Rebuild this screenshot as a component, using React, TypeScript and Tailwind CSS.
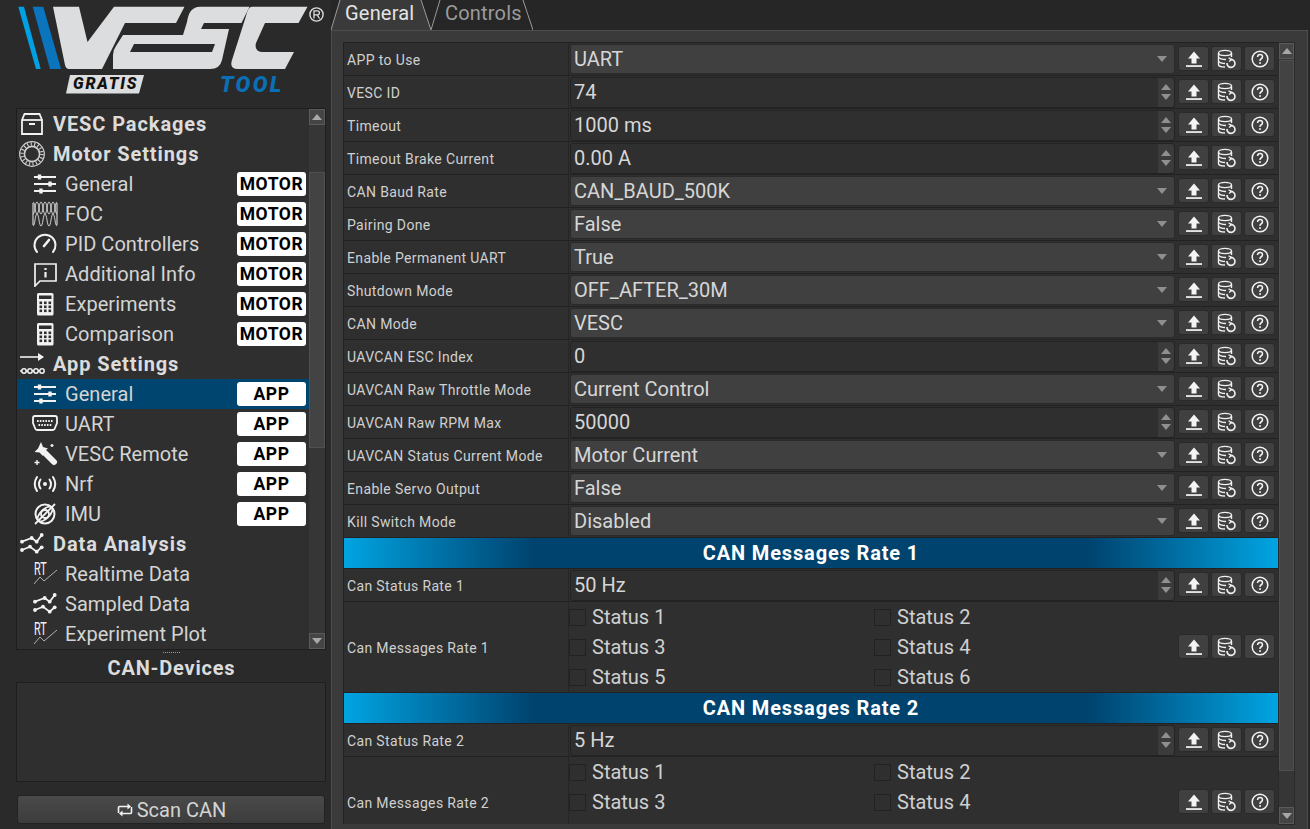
import type { ReactNode } from 'react';

const FONT = "font-['Roboto',sans-serif]";

// ---- small drawn icons ----

const Ico = ({ children, className = 'w-[26px] h-[26px]' }: { children: ReactNode; className?: string }) => (
    <svg viewBox="0 0 26 26" fill="none" stroke="#f2f2f2" strokeWidth="1.6" className={`${className} shrink-0`}>
        {children}
    </svg>
);

const IconPackage = () => (
    <Ico>
        <path d="M3 9 L5.5 3 H20.5 L23 9 V23 H3 Z" strokeWidth="1.8" />
        <path d="M3 9 H23" strokeWidth="1.8" />
        <path d="M10 13 H16" strokeWidth="2" />
    </Ico>
);

const IconMotor = () => (
    <Ico>
        <circle cx="13" cy="13" r="12.3" strokeWidth="1.2" stroke="#cfcfcf" />
        <circle cx="13" cy="13" r="7.6" strokeWidth="1.6" stroke="#cfcfcf" />
        <circle cx="13" cy="13" r="10" strokeWidth="3.4" stroke="#cfcfcf" strokeDasharray="1.1 2.4" />
    </Ico>
);

const IconSliders = () => (
    <Ico>
        <path d="M2 6 H24 M2 13 H24 M2 20 H24" strokeWidth="1.8" />
        <path d="M7.5 3.5 V8.5 M18 10.5 V15.5 M9 17.5 V22.5" strokeWidth="3.4" />
    </Ico>
);

const IconFoc = () => (
    <Ico>
        <path d="M1 2 V24 M25 2 V24" strokeWidth="1" />
        <path d="M1 1 C3 1 3 13 5 13 C7 13 7 1 9 1 C11 1 11 13 13 13 C15 13 15 1 17 1 C19 1 19 13 21 13 C23 13 23 1 25 1" strokeWidth="0.8" />
        <path d="M1 13 C3 13 3 1 5 1 C7 1 7 13 9 13 C11 13 11 1 13 1 C15 1 15 13 17 13 C19 13 19 1 21 1 C23 1 23 13 25 13" strokeWidth="0.8" />
        <path d="M1 25 C3 25 3 13 5 13 C7 13 7 25 9 25 C11 25 11 13 13 13 C15 13 15 25 17 25 C19 25 19 13 21 13 C23 13 23 25 25 25" strokeWidth="0.8" />
    </Ico>
);

const IconGauge = () => (
    <Ico>
        <path d="M5 21 A10.5 10.5 0 1 1 21 21" strokeWidth="2" strokeLinecap="round" />
        <path d="M12 15 L17 9" strokeWidth="2.6" strokeLinecap="round" />
    </Ico>
);

const IconInfo = () => (
    <Ico>
        <path d="M3 3 H24 V20 H8 L3 25 Z" strokeWidth="1.7" />
        <path d="M13.5 7 V9 M13.5 11 V16.5" strokeWidth="2.2" />
    </Ico>
);

const IconCalc = () => (
    <Ico>
        <rect x="5" y="2" width="16.5" height="22.5" rx="1.5" fill="#f2f2f2" stroke="none" />
        <rect x="7" y="4.5" width="12.5" height="3.5" fill="#2f2f2f" stroke="none" />
        {[10.5, 14.5, 18.5].map((y) =>
            [7.5, 12, 16.5].map((x) => <rect key={`${x}-${y}`} x={x} y={y} width="2.6" height="2.6" fill="#2f2f2f" stroke="none" />)
        )}
    </Ico>
);

const IconApp = () => (
    <Ico>
        <path d="M1 6 H24" strokeWidth="1.6" />
        <path d="M19 2 L25 6 L19 10 Z" fill="#f2f2f2" stroke="none" />
        <path d="M1 20 H25" strokeWidth="1.4" />
        {[5, 11, 17, 23].map((x) => <circle key={x} cx={x} cy="20" r="2.2" fill="#2b2b2b" strokeWidth="1.5" />)}
    </Ico>
);

const IconSerial = () => (
    <Ico>
        <path d="M1 7 Q1 5 3 5 H23 Q25 5 25 7 V12 L23 17 Q22.5 19 21 19 H5 Q3.5 19 3 17 L1 12 Z" strokeWidth="1.8" />
        <path d="M5 10 H21 M6.5 14 H19.5" strokeWidth="1.8" strokeDasharray="1.6 1.2" />
    </Ico>
);

const IconWand = () => (
    <Ico>
        <path d="M13 12 L22 21" strokeWidth="6" strokeLinecap="round" />
        <path d="M9 1 L11 6 L16 7.5 L12 10.5 L11 15 L7.5 11.5 L2.5 11 L6 7.5 Z" fill="#f2f2f2" stroke="none" />
        <path d="M20 3 V6 M18.5 4.5 H21.5 M5 19 V24 M2.5 21.5 H7.5" strokeWidth="1.4" />
    </Ico>
);

const IconNrf = () => (
    <Ico>
        <circle cx="13" cy="13" r="2" fill="#f2f2f2" stroke="none" />
        <path d="M8.5 8.5 Q5.5 13 8.5 17.5 M17.5 8.5 Q20.5 13 17.5 17.5" strokeWidth="2" strokeLinecap="round" />
        <path d="M5 6 Q0.5 13 5 20 M21 6 Q25.5 13 21 20" strokeWidth="2" strokeLinecap="round" />
    </Ico>
);

const IconImu = () => (
    <Ico>
        <circle cx="13" cy="13" r="9.5" strokeWidth="2" />
        <ellipse cx="13" cy="13" rx="9.5" ry="4.5" strokeWidth="1.8" transform="rotate(-45 13 13)" />
        <circle cx="13" cy="13" r="4" strokeWidth="1.8" />
        <path d="M3 23 L23 3" strokeWidth="1.8" />
    </Ico>
);

const IconWave = () => (
    <Ico>
        <path d="M3 10.7 L12.7 7 L17.7 10.7 L22.7 4" strokeWidth="1.8" />
        <path d="M3 19 L11 15.7 L17.7 20.7 L22.7 16.3" strokeWidth="1.8" />
        {[[3, 10.7], [12.7, 7], [17.7, 10.7], [22.7, 4], [3, 19], [11, 15.7], [17.7, 20.7], [22.7, 16.3]].map(([x, y]) => (
            <circle key={`${x}-${y}`} cx={x} cy={y} r="1.9" fill="#f2f2f2" stroke="none" />
        ))}
    </Ico>
);

const IconRt = () => (
    <div className="relative w-[26px] h-[26px] shrink-0">
        <span className="absolute left-[2px] top-[-1px] text-[18px] leading-[18px] text-[#f2f2f2] scale-x-[0.6] origin-left">RT</span>
        <svg viewBox="0 0 26 26" fill="none" stroke="#bdbdbd" strokeWidth="0.9" className="absolute inset-0 w-[26px] h-[26px]">
            <path d="M2 23 L8 16 L12 20 L25 9" />
        </svg>
    </div>
);

const BtnUpload = () => (
    <svg viewBox="0 0 20 20" className="w-[20px] h-[20px]">
        <path d="M10 2.5 L16 9.5 H12.5 V14.5 H7.5 V9.5 H4 Z" fill="#f4f4f4" />
        <rect x="2" y="16.2" width="16" height="1.7" fill="#f4f4f4" />
    </svg>
);

const BtnRestore = () => (
    <svg viewBox="0 0 20 20" fill="none" stroke="#f0f0f0" strokeWidth="1.4" className="w-[20px] h-[20px]">
        <ellipse cx="8" cy="4" rx="6.5" ry="2.6" />
        <path d="M1.5 4 V15.5 Q1.5 18 8 18 M14.5 4 V8 M1.5 8 Q3 10.5 9 10.5 M1.5 12 Q3 14.5 8 14.5" />
        <path d="M13 10.5 A4 4 0 1 1 10 14" strokeWidth="1.6" />
        <path d="M11.5 8.8 L14.6 10.6 L12 12.6" strokeWidth="1.3" />
    </svg>
);

const BtnHelp = () => (
    <svg viewBox="0 0 20 20" fill="none" stroke="#f4f4f4" className="w-[20px] h-[20px]">
        <circle cx="10" cy="10" r="7.8" strokeWidth="1.5" />
        <path d="M7.5 8 Q7.8 5.6 10 5.6 Q12.5 5.6 12.5 7.8 Q12.5 9.2 11 10 Q10 10.6 10 12" strokeWidth="1.5" />
        <rect x="9.2" y="13.2" width="1.7" height="1.7" fill="#f4f4f4" stroke="none" />
    </svg>
);

const Logo = () => (
    <div className="relative h-[108px] w-[331px] shrink-0">
        <svg viewBox="0 0 331 108" className="w-[331px] h-[108px]">
            <path d="M18.3 6.7 H24 L40.7 69 H36 Z" fill="#00a1e4" />
            <path d="M32.7 6.7 H43.3 L61 69 H50 Z" fill="#0a74bd" />
            <path d="M53 6.7 H79 L87.5 42 L114 6.7 H184.5 L176 23 H125 L102 69 H69 Q66 69 65 65 Z" fill="#dcddde" />
            <path d="M113 69 V55 Q113 50 116 46 L123 35 H183 L187 22 Q189 6.7 200 6.7 H249.5 L241.5 23 H204 L201 29 H229 L222 60 Q220 69 210 69 Z M134 44 L130 52 H212 L215 44 Z" fill="#dcddde" fillRule="evenodd" />
            <path d="M252 6.7 H307.5 L298.5 23 H265 L256 43 Q254 51 262 52 H294 L285 69 H238 Q229 69 232 60 L246 16 Q248 6.7 252 6.7 Z" fill="#dcddde" />
            <circle cx="316.5" cy="14.5" r="6.6" fill="none" stroke="#dcddde" strokeWidth="1.4" />
            <path d="M314 18.5 V10.8 H317.5 Q319.4 10.8 319.4 12.8 Q319.4 14.8 317.5 14.8 H314 M317 14.8 L319.6 18.5" fill="none" stroke="#dcddde" strokeWidth="1.3" />
            <path d="M70 75 H144 L139 93.5 H66 Z" fill="#dcddde" />
        </svg>
        <span className="absolute left-[73px] top-[75px] text-[16px] leading-[18px] font-black italic tracking-[1.8px] text-[#111]">GRATIS</span>
        <span className="absolute left-[220px] top-[74px] text-[22px] leading-[22px] font-black italic tracking-[2.4px] text-[#0a6fb5]">TOOL</span>
    </div>
);

// ---- sidebar ----

type NavRow = { label: string; icon: ReactNode; badge?: string; head?: boolean; active?: boolean };

const navRows: NavRow[] = [
    { label: 'VESC Packages', icon: <IconPackage />, head: true },
    { label: 'Motor Settings', icon: <IconMotor />, head: true },
    { label: 'General', icon: <IconSliders />, badge: 'MOTOR' },
    { label: 'FOC', icon: <IconFoc />, badge: 'MOTOR' },
    { label: 'PID Controllers', icon: <IconGauge />, badge: 'MOTOR' },
    { label: 'Additional Info', icon: <IconInfo />, badge: 'MOTOR' },
    { label: 'Experiments', icon: <IconCalc />, badge: 'MOTOR' },
    { label: 'Comparison', icon: <IconCalc />, badge: 'MOTOR' },
    { label: 'App Settings', icon: <IconApp />, head: true },
    { label: 'General', icon: <IconSliders />, badge: 'APP', active: true },
    { label: 'UART', icon: <IconSerial />, badge: 'APP' },
    { label: 'VESC Remote', icon: <IconWand />, badge: 'APP' },
    { label: 'Nrf', icon: <IconNrf />, badge: 'APP' },
    { label: 'IMU', icon: <IconImu />, badge: 'APP' },
    { label: 'Data Analysis', icon: <IconWave />, head: true },
    { label: 'Realtime Data', icon: <IconRt /> },
    { label: 'Sampled Data', icon: <IconWave /> },
    { label: 'Experiment Plot', icon: <IconRt /> },
];

const SideRow = ({ row }: { row: NavRow }) => (
    <div className={`h-[30px] flex items-center ${row.active ? 'bg-[#00456f]' : ''} ${row.head ? 'pl-[2px]' : 'pl-[15px]'}`}>
        {row.icon}
        {row.head ? (
            <span className="ml-[8px] text-[20px] font-bold tracking-[0.9px] text-[#dcdcdc]">{row.label}</span>
        ) : (
            <span className="ml-[7px] text-[20px] tracking-[0.05px] text-[#d4d4d4]">{row.label}</span>
        )}
        {row.badge && (
            <span className="ml-auto mr-[3px] w-[69px] h-[24px] rounded-[3px] bg-white text-black text-[17.5px] leading-[24px] font-bold text-center tracking-[0.6px]">
                {row.badge}
            </span>
        )}
    </div>
);

const ScrollArrow = ({ up, className = '' }: { up?: boolean; className?: string }) => (
    <div className={`bg-[#454545] border border-[#5a5a5a] flex items-center justify-center shrink-0 ${className}`}>
        <svg viewBox="0 0 10 6" className="w-[10px] h-[6px]">
            <path d={up ? 'M0 6 L5 0 L10 6 Z' : 'M0 0 L5 6 L10 0 Z'} fill="#a8a8a8" />
        </svg>
    </div>
);

const Sidebar = () => (
    <aside className="w-[331px] shrink-0 h-full flex flex-col bg-[#2a2a2a]">
        <Logo />
        <div className="ml-[16px] w-[310px] h-[542px] shrink-0 flex border border-[#1e1e1e] bg-[#2f2f2f] overflow-hidden">
            <div className="flex-1 min-w-0">
                {navRows.map((row, i) => <SideRow key={i} row={row} />)}
            </div>
            <div className="w-[16px] shrink-0 bg-[#363636] flex flex-col">
                <ScrollArrow up className="h-[16px]" />
                <div className="flex-1 pt-[47px] pb-[185px]">
                    <div className="h-full bg-[#434343] border border-[#505050]" />
                </div>
                <ScrollArrow className="h-[16px]" />
            </div>
        </div>
        <div className="h-[3px] mt-[2px] shrink-0 flex justify-center pl-[12px]">
            <div className="w-[17px] h-[2px] border-t border-dotted border-[#9a9a9a]" />
        </div>
        <div className="h-[27px] shrink-0 pl-[12px] text-center text-[20px] leading-[27px] font-bold tracking-[0.8px] text-[#dcdcdc]">CAN-Devices</div>
        <div className="ml-[16px] w-[310px] h-[100px] shrink-0 border border-[#1e1e1e] bg-[#2f2f2f]" />
        <button className="ml-[17px] mt-[13px] w-[308px] h-[29px] shrink-0 rounded-[3px] border border-[#222] bg-gradient-to-b from-[#4a4a4a] to-[#3c3c3c] flex items-center justify-center gap-[3px] text-[20px] text-[#d4d4d4]">
            <svg viewBox="0 0 18 14" fill="none" stroke="#f2f2f2" strokeWidth="1.6" className="w-[18px] h-[14px]">
                <path d="M2.5 10 V4.5 Q2.5 3.5 3.5 3.5 H13" />
                <path d="M15.5 4 V9.5 Q15.5 10.5 14.5 10.5 H5" />
                <path d="M11.5 0.5 L15 3.5 L11.5 6.5 Z" fill="#f2f2f2" stroke="none" />
                <path d="M6.5 7.5 L3 10.5 L6.5 13.5 Z" fill="#f2f2f2" stroke="none" />
            </svg>
            Scan CAN
        </button>
    </aside>
);

// ---- settings table ----

type Field = { label: string; value: string; kind: 'select' | 'spin' };

const fields: Field[] = [
    { label: 'APP to Use', value: 'UART', kind: 'select' },
    { label: 'VESC ID', value: '74', kind: 'spin' },
    { label: 'Timeout', value: '1000 ms', kind: 'spin' },
    { label: 'Timeout Brake Current', value: '0.00 A', kind: 'spin' },
    { label: 'CAN Baud Rate', value: 'CAN_BAUD_500K', kind: 'select' },
    { label: 'Pairing Done', value: 'False', kind: 'select' },
    { label: 'Enable Permanent UART', value: 'True', kind: 'select' },
    { label: 'Shutdown Mode', value: 'OFF_AFTER_30M', kind: 'select' },
    { label: 'CAN Mode', value: 'VESC', kind: 'select' },
    { label: 'UAVCAN ESC Index', value: '0', kind: 'spin' },
    { label: 'UAVCAN Raw Throttle Mode', value: 'Current Control', kind: 'select' },
    { label: 'UAVCAN Raw RPM Max', value: '50000', kind: 'spin' },
    { label: 'UAVCAN Status Current Mode', value: 'Motor Current', kind: 'select' },
    { label: 'Enable Servo Output', value: 'False', kind: 'select' },
    { label: 'Kill Switch Mode', value: 'Disabled', kind: 'select' },
];

const ActionButtons = () => (
    <div className="flex gap-[2px] shrink-0 ml-[3px] mr-[3px] mb-[1px]">
        {[<BtnUpload key="u" />, <BtnRestore key="r" />, <BtnHelp key="h" />].map((icon, i) => (
            <div key={i} className="w-[31px] h-[25px] rounded-[3px] border border-[#2a2a2a] bg-[#404040] flex items-center justify-center">
                {icon}
            </div>
        ))}
    </div>
);

const Tri = ({ up }: { up?: boolean }) => (
    <svg viewBox="0 0 10 6" className="w-[10px] h-[6px]">
        <path d={up ? 'M0 6 L5 0 L10 6 Z' : 'M0 0 L5 6 L10 0 Z'} fill="#8f8f8f" />
    </svg>
);

const Label = ({ text }: { text: string }) => (
    <div className="w-[225px] shrink-0 h-full flex items-center pl-[3px] pt-[2px] border-r border-[#262626] text-[14px] tracking-[0.36px] text-[#d0d0d0]">
        {text}
    </div>
);

const FieldRow = ({ field }: { field: Field }) => (
    <div className="h-[33px] shrink-0 flex items-center border-b border-[#222]">
        <Label text={field.label} />
        {field.kind === 'select' ? (
            <div className="flex-1 h-[30px] ml-[1px] rounded-[3px] border border-[#2a2a2a] bg-[#404040] flex items-center pl-[3px] pr-[7px] text-[20px] text-[#d6d6d6]">
                <span className="flex-1">{field.value}</span>
                <Tri />
            </div>
        ) : (
            <div className="flex-1 h-[31px] ml-[1px] rounded-[3px] border border-[#232323] bg-[#2f2f2f] flex items-center pl-[3px] text-[20px] text-[#d6d6d6]">
                <span className="flex-1">{field.value}</span>
                <div className="w-[16px] h-full bg-[#3b3b3b] rounded-r-[3px] flex flex-col items-center justify-center gap-[4px]">
                    <Tri up />
                    <Tri />
                </div>
            </div>
        )}
        <ActionButtons />
    </div>
);

const Band = ({ title }: { title: string }) => (
    <div className="h-[31px] shrink-0 flex border-b border-[#222]">
        <div className="w-[190px] bg-gradient-to-r from-[#00a5e3] to-[#00436f]" />
        <div className="flex-1 bg-[#00436f] flex items-center justify-center text-[20px] font-bold tracking-[0.85px] text-white">{title}</div>
        <div className="w-[190px] bg-gradient-to-r from-[#00436f] to-[#00a5e3]" />
    </div>
);

const CheckRow = ({ label, names }: { label: string; names: string[] }) => (
    <div className="h-[91px] flex border-b border-[#222] shrink-0">
        <Label text={label} />
        <div className="flex-1 grid grid-cols-[305px_1fr] grid-rows-3">
            {names.map((n) => (
                <div key={n} className="flex items-center gap-[6px] text-[20px] text-[#d0d0d0]">
                    <span className="w-[17px] h-[17px] border border-[#222] bg-[#2f2f2f]" />
                    {n}
                </div>
            ))}
        </div>
        <div className="flex items-center">
            <ActionButtons />
        </div>
    </div>
);

const statuses = ['Status 1', 'Status 2', 'Status 3', 'Status 4', 'Status 5', 'Status 6'];

const SettingsTable = () => (
    <div className="w-[935px] h-[782px] overflow-hidden border-t border-l border-[#222] bg-[#2f2f2f] flex flex-col">
        {fields.map((f) => <FieldRow key={f.label} field={f} />)}
        <Band title="CAN Messages Rate 1" />
        <FieldRow field={{ label: 'Can Status Rate 1', value: '50 Hz', kind: 'spin' }} />
        <CheckRow label="Can Messages Rate 1" names={statuses} />
        <Band title="CAN Messages Rate 2" />
        <FieldRow field={{ label: 'Can Status Rate 2', value: '5 Hz', kind: 'spin' }} />
        {/* the third line of this block sits below the fold of the scroll area */}
        <CheckRow label="Can Messages Rate 2" names={statuses.slice(0, 4)} />
    </div>
);

const Tab = ({ label, active, width }: { label: string; active?: boolean; width: number }) => (
    <div className="relative h-[30px] shrink-0" style={{ width }}>
        <svg className="absolute inset-0 w-full h-full" viewBox={`0 0 ${width} 30`} fill="none">
            <path d={`M0 30 L9 0 H${width - 10} L${width} 30`} fill={active ? '#3a3a3a' : '#262626'} />
            <path d={`M0 30 L9 0 M${width - 10} 0 L${width} 30`} stroke="#9a9a9a" strokeWidth="1" />
        </svg>
        <span className={`absolute left-[14px] top-0 leading-[26px] text-[20px] tracking-[0.2px] ${active ? 'text-[#e4e4e4]' : 'text-[#9c9c9c]'}`}>{label}</span>
    </div>
);

export default function App() {
    return (
        <div className={`w-[1310px] h-[829px] overflow-hidden flex bg-[#2a2a2a] ${FONT}`}>
            <Sidebar />
            <main className="flex-1 min-w-0 flex flex-col bg-[#262626]">
                <div className="h-[30px] flex shrink-0">
                    <Tab label="General" active width={100} />
                    <Tab label="Controls" width={102} />
                </div>
                <div className="flex-1 w-[977px] border-t border-l border-r border-[#4d4d4d] bg-[#3a3a3a] pl-[11px] pt-[11px] flex">
                    <SettingsTable />
                    <div className="w-[17px] h-[783px] shrink-0 bg-[#363636] border border-[#2a2a2a] flex flex-col">
                        <ScrollArrow up className="h-[16px]" />
                        <div className="flex-1 pt-[1px] pb-[36px]">
                            <div className="h-full bg-[#434343] border border-[#505050]" />
                        </div>
                        <ScrollArrow className="h-[17px]" />
                    </div>
                </div>
            </main>
        </div>
    );
}
